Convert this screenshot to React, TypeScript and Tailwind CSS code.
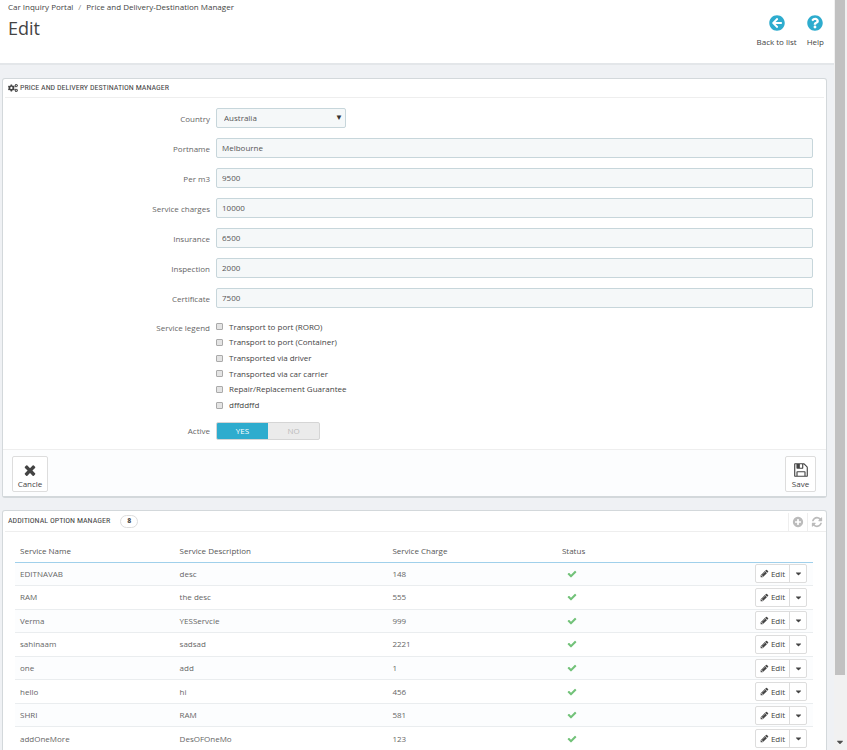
import { FaArrowCircleLeft, FaCaretDown, FaCogs, FaQuestionCircle } from 'react-icons/fa';

const textFields = [
  { id: 'portname', label: 'Portname', value: 'Melbourne' },
  { id: 'per_m3', label: 'Per m3', value: '9500' },
  { id: 'service_charges', label: 'Service charges', value: '10000' },
  { id: 'insurance', label: 'Insurance', value: '6500' },
  { id: 'inspection', label: 'Inspection', value: '2000' },
  { id: 'certificate', label: 'Certificate', value: '7500' },
];

const legends = [
  'Transport to port (RORO)',
  'Transport to port (Container)',
  'Transported via driver',
  'Transported via car carrier',
  'Repair/Replacement Guarantee',
  'dffddffd',
];

const services = [
  { name: 'EDITNAVAB', description: 'desc', charge: '148' },
  { name: 'RAM', description: 'the desc', charge: '555' },
  { name: 'Verma', description: 'YESServcie', charge: '999' },
  { name: 'sahinaam', description: 'sadsad', charge: '2221' },
  { name: 'one', description: 'add', charge: '1' },
  { name: 'hello', description: 'hi', charge: '456' },
  { name: 'SHRI', description: 'RAM', charge: '581' },
  { name: 'addOneMore', description: 'DesOFOneMo', charge: '123' },
];

const icons = {
  save: 'M512 1536h768v-384h-768v384zm896 0h128v-896q0-14-10-38.5t-20-34.5l-281-281q-10-10-34-20t-39-10v416q0 40-28 68t-68 28h-576q-40 0-68-28t-28-68v-416h-128v1280h128v-416q0-40 28-68t68-28h832q40 0 68 28t28 68v416zm-384-928v-320q0-13-9.5-22.5t-22.5-9.5h-192q-13 0-22.5 9.5t-9.5 22.5v320q0 13 9.5 22.5t22.5 9.5h192q13 0 22.5-9.5t9.5-22.5zm640 32v928q0 40-28 68t-68 28h-1344q-40 0-68-28t-28-68v-1344q0-40 28-68t68-28h928q40 0 88 20t76 48l280 280q28 28 48 76t20 88z',
  times: 'M1490 1322q0 40-28 68l-136 136q-28 28-68 28t-68-28l-294-294-294 294q-28 28-68 28t-68-28l-136-136q-28-28-28-68t28-68l294-294-294-294q-28-28-28-68t28-68l136-136q28-28 68-28t68 28l294 294 294-294q28-28 68-28t68 28l136 136q28 28 28 68t-28 68l-294 294 294 294q28 28 28 68z',
  check: 'M1671 566q0 40-28 68l-724 724-136 136q-28 28-68 28t-68-28l-136-136-362-362q-28-28-28-68t28-68l136-136q28-28 68-28t68 28l294 295 656-657q28-28 68-28t68 28l136 136q28 28 28 68z',
  pencil: 'M491 1536l91-91-235-235-91 91v107h128v128h107zm523-928q0-22-22-22-10 0-17 7l-542 542q-7 7-7 17 0 22 22 22 10 0 17-7l542-542q7-7 7-17zm-54-192l416 416-832 832h-416v-416zm683 96q0 53-37 90l-166 166-416-416 166-165q36-38 90-38 53 0 91 38l235 234q37 39 37 91z',
  plus: 'M1344 960v-128q0-26-19-45t-45-19h-256v-256q0-26-19-45t-45-19h-128q-26 0-45 19t-19 45v256h-256q-26 0-45 19t-19 45v128q0 26 19 45t45 19h256v256q0 26 19 45t45 19h128q26 0 45-19t19-45v-256h256q26 0 45-19t19-45zm320-64q0 209-103 385.5t-279.5 279.5-385.5 103-385.5-103-279.5-279.5-103-385.5 103-385.5 279.5-279.5 385.5-103 385.5 103 279.5 279.5 103 385.5z',
  refresh: 'M1639 1056q0 5-1 7-64 268-268 434.5t-478 166.5q-146 0-282.5-55t-243.5-157l-129 129q-19 19-45 19t-45-19-19-45v-448q0-26 19-45t45-19h448q26 0 45 19t19 45-19 45l-137 137q71 66 161 102t187 36q134 0 250-65t186-179q11-17 53-117 8-23 30-23h192q13 0 22.5 9.5t9.5 22.5zm25-800v448q0 26-19 45t-45 19h-448q-26 0-45-19t-19-45 19-45l138-138q-148-137-349-137-134 0-250 65t-186 179q-11 17-53 117-8 23-30 23h-199q-13 0-22.5-9.5t-9.5-22.5v-7q65-268 270-434.5t480-166.5q146 0 284 55.5t245 156.5l130-129q19-19 45-19t45 19 19 45z',
};

function Icon({ name, className }: { name: keyof typeof icons; className: string }) {
  return (
    <svg viewBox="0 0 1792 1792" fill="currentColor" className={className} aria-hidden="true">
      <path d={icons[name]} />
    </svg>
  );
}

const labelClass = 'w-[207px] shrink-0 pr-[6px] text-right text-[#666]';
const panelClass = 'rounded-[3px] border border-b-2 border-[#d3d8db] bg-white';
const headingClass = 'text-[8px] font-["Ubuntu_Condensed","Roboto_Condensed","Open_Sans_Condensed","Noto_Sans_Condensed",Roboto,sans-serif] text-[#444]';

function PageHeader() {
  return (
    <header className="flex h-[65px] justify-between border-b-2 border-[#e3e6e9] bg-white pl-2 pr-[10px]">
      <div>
        <nav aria-label="Breadcrumb" className="flex gap-[5px] pt-[1px] leading-3">
          <a href="#portal">Car Inquiry Portal</a>
          <span className="text-[#888]">/</span>
          <a href="#manager">Price and Delivery-Destination Manager</a>
        </nav>
        <h1 className="mt-[3px] text-[18px] leading-6">Edit</h1>
      </div>
      <div className="flex gap-[10px] pt-[15px]">
        <a href="#list" className="flex flex-col items-center gap-[5px]">
          <FaArrowCircleLeft className="size-4 text-[#2eacce]" />
          <span className="leading-3">Back to list</span>
        </a>
        <a href="#help" className="flex flex-col items-center gap-[5px]">
          <FaQuestionCircle className="size-4 text-[#2eacce]" />
          <span className="leading-3">Help</span>
        </a>
      </div>
    </header>
  );
}

function DestinationPanel() {
  return (
    <form className={panelClass} onSubmit={(e) => e.preventDefault()}>
      <h2 className={`mx-[2px] flex h-[19px] items-center gap-[2px] border-b border-[#eee] pl-[3px] ${headingClass}`}>
        <FaCogs className="size-[10px]" />
        PRICE AND DELIVERY DESTINATION MANAGER
      </h2>

      <div className="pl-[6px] pr-[13px] pt-[10px]">
        <div className="mb-[10px] flex items-center">
          <label htmlFor="country" className={`${labelClass} pt-[1px]`}>Country</label>
          <div className="relative w-[130px]">
            <select
              id="country"
              defaultValue="Australia"
              className="block h-5 w-full appearance-none rounded-[2px] border border-[#c7d6db] bg-[#f5f8f9] pl-[7px] text-[#555]"
            >
              <option>Australia</option>
            </select>
            <span className="pointer-events-none absolute right-[3px] top-[3px] text-[8px] leading-3 text-[#333]">▼</span>
          </div>
        </div>

        {textFields.map((field) => (
          <div key={field.id} className="mb-[10px] flex items-center">
            <label htmlFor={field.id} className={`${labelClass} pt-[1px]`}>{field.label}</label>
            <input
              id={field.id}
              type="text"
              defaultValue={field.value}
              className="h-5 min-w-0 flex-1 rounded-[2px] border border-[#c7d6db] bg-[#f5f8f9] px-[5px] pb-[2px] text-[#555]"
            />
          </div>
        ))}

        <fieldset className="flex" aria-labelledby="legend-title">
          <span id="legend-title" className={`${labelClass} leading-5`}>Service legend</span>
          <div className="mt-[1px] grid h-[94px] grid-rows-6">
            {legends.map((legend) => (
              <label key={legend} className="flex items-center gap-[6px] leading-3">
                <input
                  type="checkbox"
                  className="size-[7px] appearance-none rounded-[1px] border border-[#aaa] bg-[#e4e4e4] checked:bg-[#2eacce]"
                />
                {legend}
              </label>
            ))}
          </div>
        </fieldset>

        <fieldset className="mt-[9px] flex items-center pb-[9px]" aria-labelledby="active-title">
          <span id="active-title" className={labelClass}>Active</span>
          <div className="flex h-[18px] w-[104px] overflow-hidden rounded-[2px] border border-[#d5d5d5] bg-[#ebebeb] text-center leading-[15px] text-[#bbb]">
            <label className="flex-1 has-checked:bg-[#2eacce] has-checked:text-white">
              <input type="radio" name="active" defaultChecked className="sr-only" />
              YES
            </label>
            <label className="flex-1 has-checked:bg-[#2eacce] has-checked:text-white">
              <input type="radio" name="active" className="sr-only" />
              NO
            </label>
          </div>
        </fieldset>
      </div>

      <div className="flex justify-between border-t border-[#eee] bg-[#fcfdfe] pb-1 pl-[9px] pr-[10px] pt-[6px]">
        <button type="button" className="flex h-9 w-9 flex-col items-center rounded-[2px] border border-[#ddd] bg-white pt-[5px]">
          <Icon name="times" className="size-4" />
          <span className="leading-3">Cancle</span>
        </button>
        <button type="submit" className="flex h-9 w-[31px] flex-col items-center rounded-[2px] border border-[#ddd] bg-white pt-[5px]">
          <Icon name="save" className="size-4" />
          <span className="leading-3">Save</span>
        </button>
      </div>
    </form>
  );
}

function OptionsPanel() {
  return (
    <section className={`mt-3 ${panelClass}`}>
      <div className="ml-[2px] flex h-[21px] border-b border-[#eee] pl-[3px]">
        <h2 className={`flex flex-1 items-center gap-[10px] ${headingClass}`}>
          ADDITIONAL OPTION MANAGER
          <span className="flex h-[13px] w-[18px] items-center justify-center rounded-full border border-[#ddd] font-bold">8</span>
        </h2>
        <button type="button" aria-label="Add new" className="mt-[2px] flex w-[19px] items-center justify-center border-l border-[#eee] text-[#bbb]">
          <Icon name="plus" className="size-3" />
        </button>
        <button type="button" aria-label="Refresh list" className="mt-[2px] flex w-[19px] items-center justify-center border-l border-[#eee] text-[#bbb]">
          <Icon name="refresh" className="size-3" />
        </button>
      </div>

      <div className="pb-3 pl-3 pr-[13px] pt-[9px]">
        <table className="h-[210px] w-full table-fixed border-collapse text-left text-[#666]">
          <colgroup>
            <col className="w-3/15" />
            <col className="w-4/15" />
            <col className="w-3/15" />
            <col className="w-1/15" />
            <col />
          </colgroup>
          <thead>
            <tr className="h-[21px] border-b border-[#a0d0eb] text-[#555]">
              <th className="px-[5px] font-normal">Service Name</th>
              <th className="px-[5px] font-normal">Service Description</th>
              <th className="px-[5px] font-normal">Service Charge</th>
              <th className="px-[5px] text-center font-normal">Status</th>
              <th aria-label="Actions" />
            </tr>
          </thead>
          <tbody>
            {services.map((service) => (
              <tr key={service.name} className="border-b border-[#eaedef] odd:bg-[#fcfdfe]">
                <td className="px-[5px]">{service.name}</td>
                <td className="px-[5px]">{service.description}</td>
                <td className="px-[5px]">{service.charge}</td>
                <td className="pl-[5px] pr-[9px]">
                  <Icon name="check" className="mx-auto size-[10px] text-[#72c279]" />
                </td>
                <td className="pr-[6px]">
                  <div className="ml-auto flex h-[19px] w-[52px] rounded-[2px] border border-[#ddd] bg-white text-[#444]">
                    <button type="button" className="flex flex-1 items-center justify-center gap-[2px]">
                      <Icon name="pencil" className="size-[9px]" />
                      Edit
                    </button>
                    <button type="button" aria-label="More actions" className="flex w-[17px] items-center justify-center border-l border-[#ddd]">
                      <FaCaretDown className="size-[9px]" />
                    </button>
                  </div>
                </td>
              </tr>
            ))}
          </tbody>
        </table>
      </div>
    </section>
  );
}

// Window scrollbar, drawn to the right of the page
function ScrollRail() {
  return (
    <div className="flex w-[13px] shrink-0 flex-col bg-[#f1f1f1] pl-[1px] pr-[2px]" aria-hidden="true">
      <div className="h-[90%] bg-[#c1c1c1]" />
      <FaCaretDown className="mb-[3px] mt-auto size-[10px] self-center text-[#505050]" />
    </div>
  );
}

export default function App() {
  return (
    <div className='flex h-screen overflow-hidden bg-[#eff1f4] font-["Open_Sans",sans-serif] text-[8px] leading-3 text-[#444]'>
      <div className="min-w-0 flex-1">
        <PageHeader />
        <main className="pl-[2px] pr-[7px] pt-[13px]">
          <DestinationPanel />
          <OptionsPanel />
        </main>
      </div>
      <ScrollRail />
    </div>
  );
}
